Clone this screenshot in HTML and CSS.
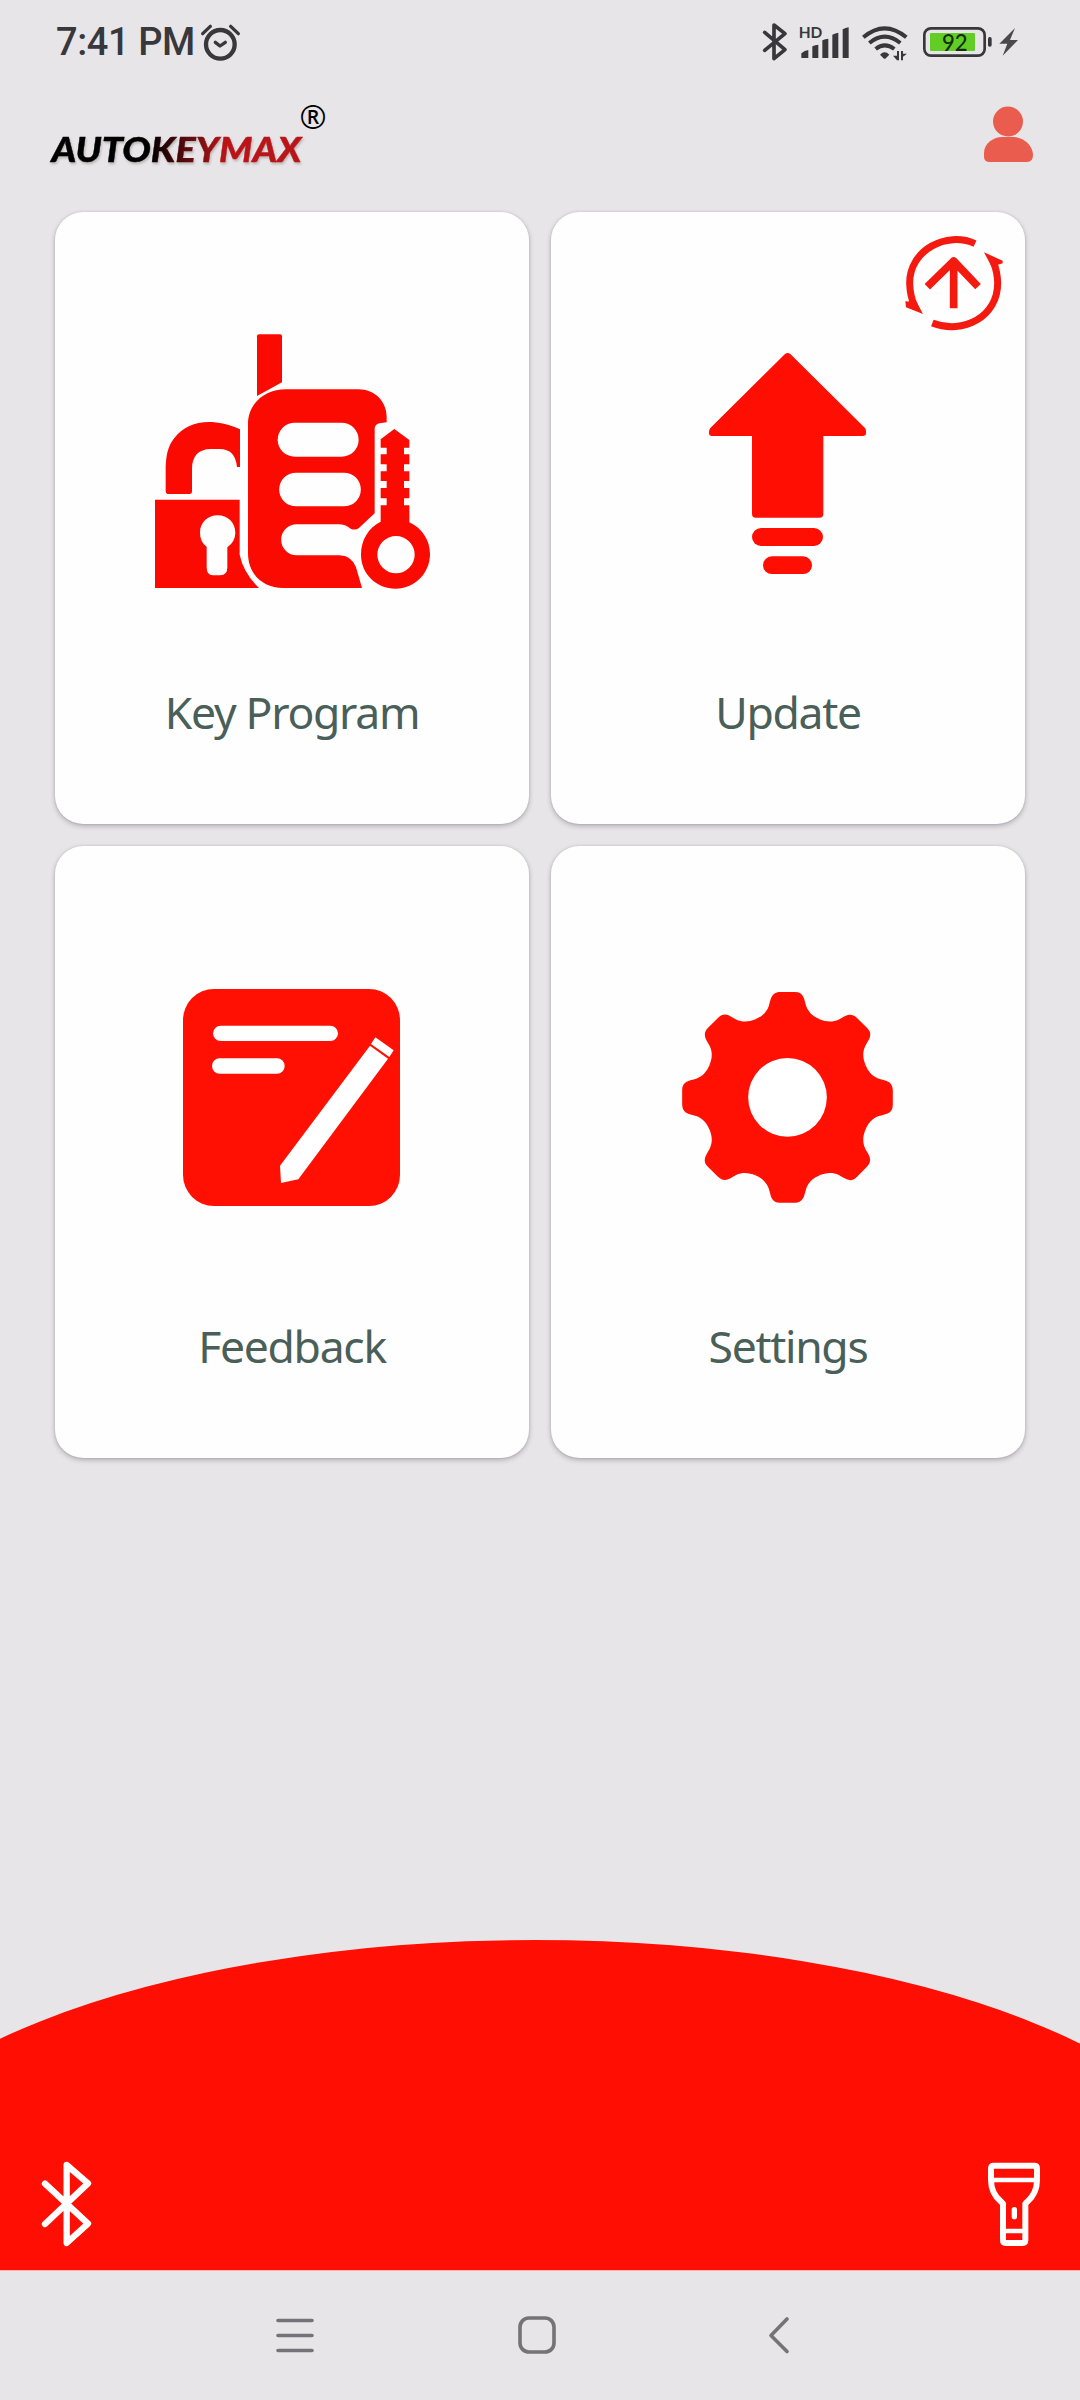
FILE: index.html
```html
<!DOCTYPE html>
<html lang="en">
<head>
<meta charset="utf-8">
<title>AutoKeyMax</title>
<link rel="stylesheet" href="styles.css">
</head>
<body>
<div class="screen">
  <div class="status-bar">
    <span class="clock">7:41 PM</span>
    <svg class="alarm" viewBox="510 60 126 126" fill="none" stroke="#38373b" stroke-linecap="round">
      <circle cx="571" cy="130" r="43" stroke-width="13"/>
      <path d="M518 98L541 76M602 76L625 98" stroke-width="10"/>
      <path d="M556 124L570 135L586 124" stroke-width="10" stroke-linejoin="round"/>
    </svg>
    <svg class="indicators" viewBox="0 0 900 252" fill="#38373b">
      <path d="M74 97L135 149L102 176V75L135 101L74 151" fill="none" stroke="#38373b" stroke-width="11" stroke-linecap="round" stroke-linejoin="round"/>
      <text class="hd" x="176" y="113" textLength="71" lengthAdjust="spacingAndGlyphs">HD</text>
      <path d="M184 174V160Q194 151 205 150V174ZM217 174V139Q226 135 235 134V174ZM247 174V121Q256 117 265 116V174ZM277 174V104Q286 100 295 98V174ZM308 174V88Q317 84 326 82V174Z"/>
      <g fill="none" stroke="#38373b" stroke-width="12">
        <path d="M370 112Q434 58 499 112"/>
        <path d="M388 129Q434 91 481 129"/>
        <path d="M407 147Q434 125 463 147"/>
      </g>
      <path d="M420 164Q434 150 448 164L436 176H432Z"/>
      <path d="M471 153H477V181H471L459 167H471ZM483 181V153H489V161H501L489 170V181Z"/>
      <rect x="553" y="85" width="181" height="82" rx="20" fill="none" stroke="#38373b" stroke-width="8"/>
      <rect x="570" y="99" width="135" height="54" rx="4" fill="#61cd25"/>
      <rect x="744" y="111" width="11" height="29" rx="5"/>
      <text class="level" x="606" y="152" textLength="77" lengthAdjust="spacingAndGlyphs">92</text>
      <path d="M825 84L778 131H802L788 167L834 120H810Z" fill="#4a494d"/>
    </svg>
  </div>

  <div class="header">
    <svg class="logo" viewBox="40 84 320 128">
      <defs>
        <linearGradient id="brand" gradientUnits="userSpaceOnUse" x1="150" y1="0" x2="225" y2="0">
          <stop offset="0" stop-color="#000"/>
          <stop offset="1" stop-color="#b91418"/>
        </linearGradient>
      </defs>
      <text class="brand" x="51.500" y="161.500" textLength="250" lengthAdjust="spacingAndGlyphs" fill="url(#brand)" stroke="url(#brand)" stroke-width="0.400">AUTOKEYMAX</text>
      <text class="reg" x="299.500" y="129" textLength="27" lengthAdjust="spacingAndGlyphs">®</text>
    </svg>
    <svg class="user" viewBox="960 84 80 128" fill="#ea5d4e">
      <circle cx="1008" cy="121.500" r="15"/>
      <path d="M984 153C984 143 994 137 1002 137H1014C1023 137 1033 145 1033 155Q1033 162 1027 162H990Q984 162 984 157Z"/>
    </svg>
  </div>

  <div class="grid">
    <div class="card">
      <svg class="icon" viewBox="6 0 900 840" fill="#fb0a02">
        <path d="M357 43H420Q426 43 426 49V187L351 228V49Q351 43 357 43Z"/>
        <path d="M438 208H655C705 208 740 245 740 292V307L718 310Q704 314 704 326V580L656 625Q645 632 632 626Q616 613 596 613H470A46.500 46.500 0 0 0 470 706H598Q634 706 648 742L666 804H430C366 804 324 760 324 700V312C324 250 375 208 438 208ZM464 308A51 51 0 0 0 464 410H605A51 51 0 0 0 605 308ZM468 458A50.500 50.500 0 0 0 468 559H612A50.500 50.500 0 0 0 612 458Z" fill-rule="evenodd"/>
        <path d="M86 522Q77 522 77 512V455C77 408 83 379 103 354C145 300 218 292 300 328V441H291C287 405 272 387 238 387H213C174 387 156 410 156 447V514Q156 522 148 522Z"/>
        <path d="M45 539H299V704Q310 758 357 804H45ZM200 680V742Q200 766 218 766H241Q262 766 262 742V682Q286 664 286 638C286 606 262 586 233 586C204 586 180 606 180 638Q180 666 200 680Z" fill-rule="evenodd"/>
        <path d="M763 327L808 360V383H792V403H808V433H792V454H808V483H792V504H808V535H792V556H808V607C845 624 870 660 870 702C870 760 824 806 767 806C710 806 663 762 663 704C663 660 686 622 722 605V556H740V535H722V504H740V483H722V454H740V433H722V403H740V383H722V358ZM768 648A56 56 0 1 0 768 760A56 56 0 1 0 768 648Z" fill-rule="evenodd"/>
      </svg>
      <div class="label">Key Program</div>
    </div>

    <div class="card">
      <svg class="badge" viewBox="630 90 324 324" fill="none" stroke="#f51a10" stroke-width="21">
        <path d="M855 131C770 92 658 150 659 250Q660 288 673 316"/>
        <path d="M727 369C820 405 924 350 923 248Q922 214 910 186"/>
        <path d="M712 260L791 183L864 260M791 183V325" stroke-width="23" stroke-linejoin="round"/>
        <path d="M882 157L938 182V190L905 200ZM646 304L680 306L699 342L648 322Z" fill="#f51a10" stroke="none"/>
      </svg>
      <svg class="icon" viewBox="-156 360 900 840" fill="#ff0f03">
        <path d="M285 462Q293 456 301 462L525 684Q529 689 528 700Q528 708 518 708H400V942Q400 953 389 953H197Q186 953 186 942V708H66Q57 708 57 700Q56 690 61 684Z"/>
        <rect x="186" y="984" width="213" height="54" rx="27"/>
        <rect x="219" y="1069" width="147" height="53" rx="26.500"/>
      </svg>
      <div class="label">Update</div>
    </div>

    <div class="card">
      <svg class="icon" viewBox="-54 -48 900 840" fill="#fff">
        <rect x="69" y="57" width="651" height="651" rx="93" fill="#ff1003"/>
        <rect x="159" y="167" width="375" height="46" rx="23"/>
        <rect x="156" y="265" width="218" height="46" rx="23"/>
        <path d="M646 202L701 241L688 261L633 222ZM630 227L684 266L415 628L363 639L360 587Z"/>
      </svg>
      <div class="label">Feedback</div>
    </div>

    <div class="card">
      <svg class="icon" viewBox="-66 -48 900 840" fill="#ff1003">
        <defs>
          <path id="tooth" d="M-97 -234C-80 -241 -64 -252 -56 -274C-50 -293 -50 -316 -20 -316H22C50 -316 50 -293 56 -274C64 -252 80 -241 97 -234L0 0Z"/>
        </defs>
        <g transform="translate(382.500 382)">
          <circle r="250"/>
          <use href="#tooth"/>
          <use href="#tooth" transform="rotate(45)"/>
          <use href="#tooth" transform="rotate(90)"/>
          <use href="#tooth" transform="rotate(135)"/>
          <use href="#tooth" transform="rotate(180)"/>
          <use href="#tooth" transform="rotate(225)"/>
          <use href="#tooth" transform="rotate(270)"/>
          <use href="#tooth" transform="rotate(315)"/>
          <circle r="118" fill="#fff"/>
        </g>
      </svg>
      <div class="label">Settings</div>
    </div>
  </div>

  <div class="footer">
    <svg class="arc" viewBox="0 1939 1080 332">
      <ellipse cx="535" cy="2218" rx="700" ry="278" fill="#ff0f03"/>
      <rect x="0" y="2200" width="1080" height="70" fill="#ff0f03"/>
      <rect x="0" y="2270" width="1080" height="1" fill="#ffb0b0"/>
    </svg>
    <svg class="bluetooth" viewBox="0 0 420 420" fill="none" stroke="#fff" stroke-width="19" stroke-linecap="round" stroke-linejoin="round">
      <path d="M135 161L264 281L200 339V105L264 160L135 282"/>
    </svg>
    <svg class="torch" viewBox="0 0 360 420" fill="none" stroke="#fff" stroke-width="18" stroke-linejoin="round">
      <path d="M101 107H223Q231 107 231 115V150Q231 190 202 215L196 221V331Q196 339 188 339H137Q129 339 129 331V221L123 215Q93 190 93 150V115Q93 107 101 107Z"/>
      <path d="M93 150H231M129 303H196" stroke-width="14"/>
      <path d="M163 239V260" stroke-width="16" stroke-linecap="round"/>
    </svg>
  </div>

  <div class="nav">
    <svg viewBox="0 0 40 40"><path d="M3 5.500H37M3 20.500H37M3 35.500H37"/></svg>
    <svg viewBox="0 0 40 40"><rect x="3" y="3" width="34" height="34" rx="9"/></svg>
    <svg viewBox="0 0 40 40"><path d="M28 4L12 20.500L28 36.500"/></svg>
  </div>
</div>
</body>
</html>
```
FILE: styles.css
```css
body {
  margin: 0;
  background: #e7e5e8;
}

svg {
  display: block;
  flex: none;
}

.screen {
  width: 1080px;
  height: 2400px;
  display: flex;
  flex-direction: column;
  overflow: hidden;
  font-family: "Noto Sans", sans-serif;
}

.status-bar {
  height: 84px;
  display: flex;
  align-items: center;
  padding: 0 40px 0 56px;
  box-sizing: border-box;
}

.clock {
  width: 144px;
  font: 500 38px/84px Roboto, sans-serif;
  letter-spacing: -0.4px;
  color: #38373b;
  white-space: nowrap;
}

.alarm {
  width: 42px;
  height: 42px;
}

.indicators {
  width: 300px;
  height: 84px;
  margin-left: auto;
}

.hd {
  font: 700 46px Lato, sans-serif;
}

.level {
  font: 500 67px Lato, sans-serif;
  fill: #12300a;
}

.header {
  height: 128px;
  display: flex;
  justify-content: space-between;
  padding: 0 40px;
}

.logo {
  width: 320px;
  height: 128px;
}

.brand {
  font: italic 900 35px Lato, sans-serif;
  filter: drop-shadow(1px 2px 1px rgba(90, 70, 60, 0.3));
}

.reg {
  font: 400 33px "Open Sans", sans-serif;
}

.user {
  width: 80px;
  height: 128px;
}

.grid {
  display: grid;
  grid-template-columns: 474px 474px;
  grid-auto-rows: 612px;
  gap: 22px;
  padding: 0 55px;
}

.card {
  position: relative;
  display: flex;
  flex-direction: column;
  align-items: center;
  box-sizing: border-box;
  padding-top: 108px;
  border-radius: 28px;
  background: #fefefe;
  box-shadow: 0 2px 5px rgba(60, 50, 70, 0.32), 0 0 2px rgba(60, 50, 70, 0.15);
}

.icon {
  width: 300px;
  height: 280px;
}

.label {
  margin-top: 82px;
  font-size: 44.5px;
  line-height: 60px;
  letter-spacing: -1.3px;
  color: #4a5f58;
}

.badge {
  position: absolute;
  top: 18px;
  left: 349px;
  width: 108px;
  height: 108px;
}

.footer {
  position: relative;
  height: 331px;
  margin-top: auto;
  display: flex;
  align-items: flex-end;
  justify-content: space-between;
}

.arc {
  position: absolute;
  left: 0;
  bottom: 0;
  width: 1080px;
  height: 332px;
}

.bluetooth {
  position: relative;
  width: 140px;
  height: 140px;
  margin-bottom: 1px;
}

.torch {
  position: relative;
  width: 120px;
  height: 140px;
  margin-bottom: 1px;
}

.nav {
  height: 129px;
  display: flex;
  align-items: center;
  justify-content: space-between;
  box-sizing: border-box;
  padding: 0 281px 2px 275px;
}

.nav svg {
  width: 40px;
  height: 40px;
  fill: none;
  stroke: #757377;
  stroke-width: 3.6;
  stroke-linecap: round;
  stroke-linejoin: round;
}
```
